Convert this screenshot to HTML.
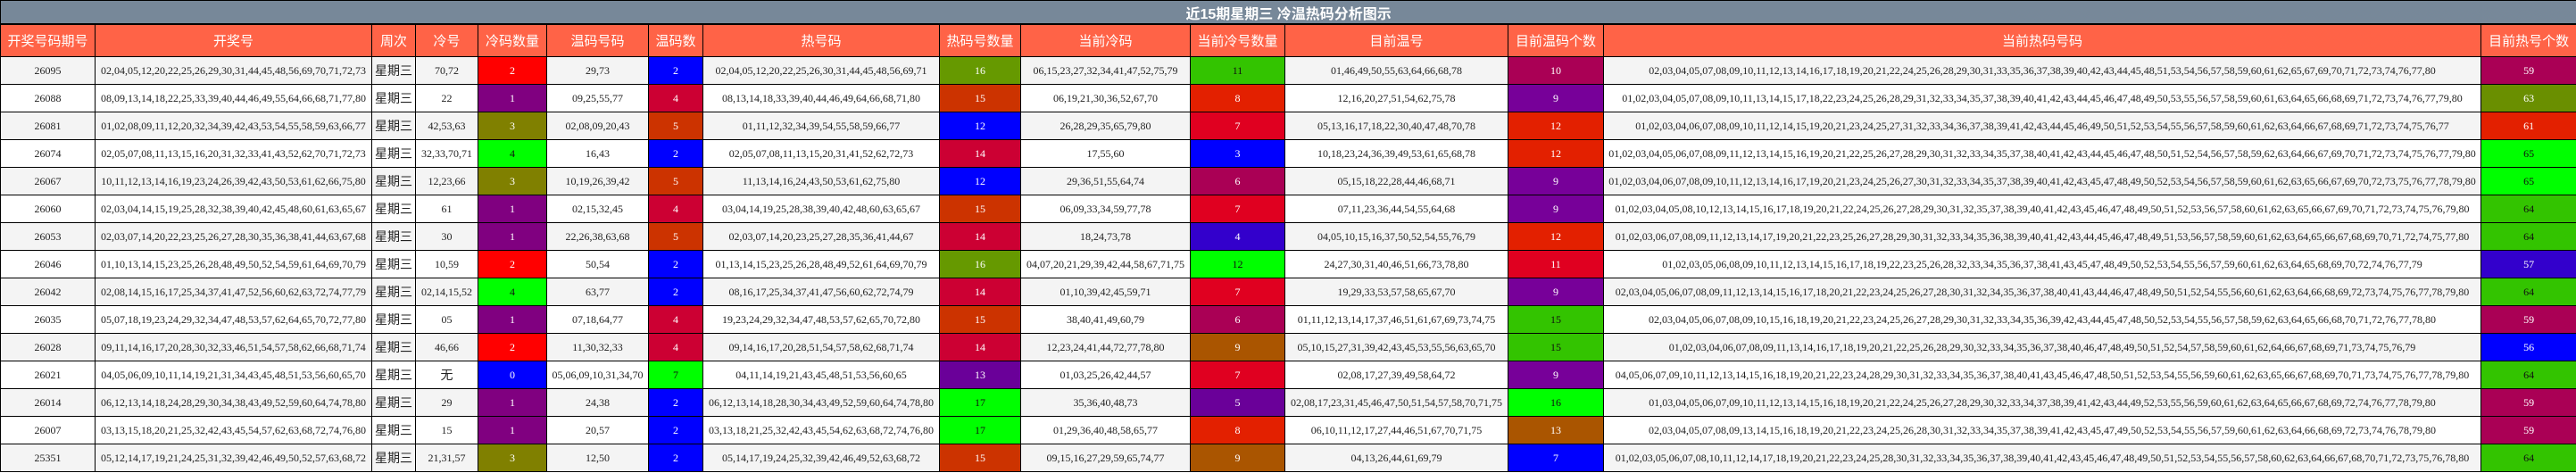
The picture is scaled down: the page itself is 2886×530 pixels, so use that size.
<!DOCTYPE html>
<html><head><meta charset="utf-8">
<style>
html,body{margin:0;padding:0;background:#fff;}
body{width:2886px;height:530px;overflow:hidden;}
table{border-collapse:collapse;table-layout:fixed;width:2886px;}
td,th{border:1px solid #000;padding:0;text-align:center;white-space:nowrap;overflow:hidden;}
.title td{height:25px;background:#778899;color:#fff;font:bold 16px "Liberation Sans","Noto Sans CJK SC",sans-serif;border-bottom:2px solid #000;}
.hd th{height:35px;background:#ff6347;color:#fff;font-weight:normal;font-size:15px;font-family:"Liberation Sans","Noto Sans CJK SC",sans-serif;}
tbody tr.r td{height:30px;font:12px "Liberation Serif","Noto Sans CJK SC",serif;color:#222;}
tbody tr.r:nth-child(odd) td{background:#f4f4f4;}
tbody tr.r:nth-child(even) td{background:#fff;}
tbody tr.r td.w{font-family:"Liberation Sans","Noto Sans CJK SC",sans-serif;font-size:14px;}
tbody tr.r td.c{color:#fff;}
tr.r td.red{background:#ff0000!important}
tr.r td.pur{background:#800080!important}
tr.r td.oli{background:#808000!important}
tr.r td.lim{background:#00ff00!important;color:#111!important}
tr.r td.blu{background:#0000ff!important}
tr.r td.org{background:#cc3300!important}
tr.r td.crm{background:#cc0033!important}
tr.r td.ogr{background:#669900!important}
tr.r td.grn{background:#33c400!important;color:#111!important}
tr.r td.ver{background:#e32000!important}
tr.r td.mar{background:#aa0055!important}
tr.r td.vio{background:#770099!important}
tr.r td.rd2{background:#e00020!important}
tr.r td.ind{background:#3300cc!important}
tr.r td.brn{background:#aa5500!important}
tr.r td.pu2{background:#6a0099!important}
tr.r td.olg{background:#6a8f00!important}
</style></head><body>
<table>
<colgroup>
<col style="width:106px"><col style="width:310px"><col style="width:49px"><col style="width:70px"><col style="width:77px"><col style="width:114px"><col style="width:61px"><col style="width:265px"><col style="width:91px"><col style="width:190px"><col style="width:106px"><col style="width:250px"><col style="width:107px"><col style="width:983px"><col style="width:107px">
</colgroup>
<tbody>
<tr class="title"><td colspan="15">近15期星期三 冷温热码分析图示</td></tr>
<tr class="hd"><th>开奖号码期号</th><th>开奖号</th><th>周次</th><th>冷号</th><th>冷码数量</th><th>温码号码</th><th>温码数</th><th>热号码</th><th>热码号数量</th><th>当前冷码</th><th>当前冷号数量</th><th>目前温号</th><th>目前温码个数</th><th>当前热码号码</th><th>目前热号个数</th></tr>

<tr class="r"><td>26095</td><td>02,04,05,12,20,22,25,26,29,30,31,44,45,48,56,69,70,71,72,73</td><td class="w">星期三</td><td>70,72</td><td class="c red">2</td><td>29,73</td><td class="c blu">2</td><td>02,04,05,12,20,22,25,26,30,31,44,45,48,56,69,71</td><td class="c ogr">16</td><td>06,15,23,27,32,34,41,47,52,75,79</td><td class="c grn">11</td><td>01,46,49,50,55,63,64,66,68,78</td><td class="c mar">10</td><td>02,03,04,05,07,08,09,10,11,12,13,14,16,17,18,19,20,21,22,24,25,26,28,29,30,31,33,35,36,37,38,39,40,42,43,44,45,48,51,53,54,56,57,58,59,60,61,62,65,67,69,70,71,72,73,74,76,77,80</td><td class="c mar">59</td></tr>

<tr class="r"><td>26088</td><td>08,09,13,14,18,22,25,33,39,40,44,46,49,55,64,66,68,71,77,80</td><td class="w">星期三</td><td>22</td><td class="c pur">1</td><td>09,25,55,77</td><td class="c crm">4</td><td>08,13,14,18,33,39,40,44,46,49,64,66,68,71,80</td><td class="c org">15</td><td>06,19,21,30,36,52,67,70</td><td class="c ver">8</td><td>12,16,20,27,51,54,62,75,78</td><td class="c vio">9</td><td>01,02,03,04,05,07,08,09,10,11,13,14,15,17,18,22,23,24,25,26,28,29,31,32,33,34,35,37,38,39,40,41,42,43,44,45,46,47,48,49,50,53,55,56,57,58,59,60,61,63,64,65,66,68,69,71,72,73,74,76,77,79,80</td><td class="c olg">63</td></tr>

<tr class="r"><td>26081</td><td>01,02,08,09,11,12,20,32,34,39,42,43,53,54,55,58,59,63,66,77</td><td class="w">星期三</td><td>42,53,63</td><td class="c oli">3</td><td>02,08,09,20,43</td><td class="c org">5</td><td>01,11,12,32,34,39,54,55,58,59,66,77</td><td class="c blu">12</td><td>26,28,29,35,65,79,80</td><td class="c rd2">7</td><td>05,13,16,17,18,22,30,40,47,48,70,78</td><td class="c ver">12</td><td>01,02,03,04,06,07,08,09,10,11,12,14,15,19,20,21,23,24,25,27,31,32,33,34,36,37,38,39,41,42,43,44,45,46,49,50,51,52,53,54,55,56,57,58,59,60,61,62,63,64,66,67,68,69,71,72,73,74,75,76,77</td><td class="c ver">61</td></tr>

<tr class="r"><td>26074</td><td>02,05,07,08,11,13,15,16,20,31,32,33,41,43,52,62,70,71,72,73</td><td class="w">星期三</td><td>32,33,70,71</td><td class="c lim">4</td><td>16,43</td><td class="c blu">2</td><td>02,05,07,08,11,13,15,20,31,41,52,62,72,73</td><td class="c crm">14</td><td>17,55,60</td><td class="c blu">3</td><td>10,18,23,24,36,39,49,53,61,65,68,78</td><td class="c ver">12</td><td>01,02,03,04,05,06,07,08,09,11,12,13,14,15,16,19,20,21,22,25,26,27,28,29,30,31,32,33,34,35,37,38,40,41,42,43,44,45,46,47,48,50,51,52,54,56,57,58,59,62,63,64,66,67,69,70,71,72,73,74,75,76,77,79,80</td><td class="c lim">65</td></tr>

<tr class="r"><td>26067</td><td>10,11,12,13,14,16,19,23,24,26,39,42,43,50,53,61,62,66,75,80</td><td class="w">星期三</td><td>12,23,66</td><td class="c oli">3</td><td>10,19,26,39,42</td><td class="c org">5</td><td>11,13,14,16,24,43,50,53,61,62,75,80</td><td class="c blu">12</td><td>29,36,51,55,64,74</td><td class="c mar">6</td><td>05,15,18,22,28,44,46,68,71</td><td class="c vio">9</td><td>01,02,03,04,06,07,08,09,10,11,12,13,14,16,17,19,20,21,23,24,25,26,27,30,31,32,33,34,35,37,38,39,40,41,42,43,45,47,48,49,50,52,53,54,56,57,58,59,60,61,62,63,65,66,67,69,70,72,73,75,76,77,78,79,80</td><td class="c lim">65</td></tr>

<tr class="r"><td>26060</td><td>02,03,04,14,15,19,25,28,32,38,39,40,42,45,48,60,61,63,65,67</td><td class="w">星期三</td><td>61</td><td class="c pur">1</td><td>02,15,32,45</td><td class="c crm">4</td><td>03,04,14,19,25,28,38,39,40,42,48,60,63,65,67</td><td class="c org">15</td><td>06,09,33,34,59,77,78</td><td class="c rd2">7</td><td>07,11,23,36,44,54,55,64,68</td><td class="c vio">9</td><td>01,02,03,04,05,08,10,12,13,14,15,16,17,18,19,20,21,22,24,25,26,27,28,29,30,31,32,35,37,38,39,40,41,42,43,45,46,47,48,49,50,51,52,53,56,57,58,60,61,62,63,65,66,67,69,70,71,72,73,74,75,76,79,80</td><td class="c grn">64</td></tr>

<tr class="r"><td>26053</td><td>02,03,07,14,20,22,23,25,26,27,28,30,35,36,38,41,44,63,67,68</td><td class="w">星期三</td><td>30</td><td class="c pur">1</td><td>22,26,38,63,68</td><td class="c org">5</td><td>02,03,07,14,20,23,25,27,28,35,36,41,44,67</td><td class="c crm">14</td><td>18,24,73,78</td><td class="c ind">4</td><td>04,05,10,15,16,37,50,52,54,55,76,79</td><td class="c ver">12</td><td>01,02,03,06,07,08,09,11,12,13,14,17,19,20,21,22,23,25,26,27,28,29,30,31,32,33,34,35,36,38,39,40,41,42,43,44,45,46,47,48,49,51,53,56,57,58,59,60,61,62,63,64,65,66,67,68,69,70,71,72,74,75,77,80</td><td class="c grn">64</td></tr>

<tr class="r"><td>26046</td><td>01,10,13,14,15,23,25,26,28,48,49,50,52,54,59,61,64,69,70,79</td><td class="w">星期三</td><td>10,59</td><td class="c red">2</td><td>50,54</td><td class="c blu">2</td><td>01,13,14,15,23,25,26,28,48,49,52,61,64,69,70,79</td><td class="c ogr">16</td><td>04,07,20,21,29,39,42,44,58,67,71,75</td><td class="c lim">12</td><td>24,27,30,31,40,46,51,66,73,78,80</td><td class="c rd2">11</td><td>01,02,03,05,06,08,09,10,11,12,13,14,15,16,17,18,19,22,23,25,26,28,32,33,34,35,36,37,38,41,43,45,47,48,49,50,52,53,54,55,56,57,59,60,61,62,63,64,65,68,69,70,72,74,76,77,79</td><td class="c ind">57</td></tr>

<tr class="r"><td>26042</td><td>02,08,14,15,16,17,25,34,37,41,47,52,56,60,62,63,72,74,77,79</td><td class="w">星期三</td><td>02,14,15,52</td><td class="c lim">4</td><td>63,77</td><td class="c blu">2</td><td>08,16,17,25,34,37,41,47,56,60,62,72,74,79</td><td class="c crm">14</td><td>01,10,39,42,45,59,71</td><td class="c rd2">7</td><td>19,29,33,53,57,58,65,67,70</td><td class="c vio">9</td><td>02,03,04,05,06,07,08,09,11,12,13,14,15,16,17,18,20,21,22,23,24,25,26,27,28,30,31,32,34,35,36,37,38,40,41,43,44,46,47,48,49,50,51,52,54,55,56,60,61,62,63,64,66,68,69,72,73,74,75,76,77,78,79,80</td><td class="c grn">64</td></tr>

<tr class="r"><td>26035</td><td>05,07,18,19,23,24,29,32,34,47,48,53,57,62,64,65,70,72,77,80</td><td class="w">星期三</td><td>05</td><td class="c pur">1</td><td>07,18,64,77</td><td class="c crm">4</td><td>19,23,24,29,32,34,47,48,53,57,62,65,70,72,80</td><td class="c org">15</td><td>38,40,41,49,60,79</td><td class="c mar">6</td><td>01,11,12,13,14,17,37,46,51,61,67,69,73,74,75</td><td class="c grn">15</td><td>02,03,04,05,06,07,08,09,10,15,16,18,19,20,21,22,23,24,25,26,27,28,29,30,31,32,33,34,35,36,39,42,43,44,45,47,48,50,52,53,54,55,56,57,58,59,62,63,64,65,66,68,70,71,72,76,77,78,80</td><td class="c mar">59</td></tr>

<tr class="r"><td>26028</td><td>09,11,14,16,17,20,28,30,32,33,46,51,54,57,58,62,66,68,71,74</td><td class="w">星期三</td><td>46,66</td><td class="c red">2</td><td>11,30,32,33</td><td class="c crm">4</td><td>09,14,16,17,20,28,51,54,57,58,62,68,71,74</td><td class="c crm">14</td><td>12,23,24,41,44,72,77,78,80</td><td class="c brn">9</td><td>05,10,15,27,31,39,42,43,45,53,55,56,63,65,70</td><td class="c grn">15</td><td>01,02,03,04,06,07,08,09,11,13,14,16,17,18,19,20,21,22,25,26,28,29,30,32,33,34,35,36,37,38,40,46,47,48,49,50,51,52,54,57,58,59,60,61,62,64,66,67,68,69,71,73,74,75,76,79</td><td class="c blu">56</td></tr>

<tr class="r"><td>26021</td><td>04,05,06,09,10,11,14,19,21,31,34,43,45,48,51,53,56,60,65,70</td><td class="w">星期三</td><td class="w">无</td><td class="c blu">0</td><td>05,06,09,10,31,34,70</td><td class="c lim">7</td><td>04,11,14,19,21,43,45,48,51,53,56,60,65</td><td class="c pu2">13</td><td>01,03,25,26,42,44,57</td><td class="c rd2">7</td><td>02,08,17,27,39,49,58,64,72</td><td class="c vio">9</td><td>04,05,06,07,09,10,11,12,13,14,15,16,18,19,20,21,22,23,24,28,29,30,31,32,33,34,35,36,37,38,40,41,43,45,46,47,48,50,51,52,53,54,55,56,59,60,61,62,63,65,66,67,68,69,70,71,73,74,75,76,77,78,79,80</td><td class="c grn">64</td></tr>

<tr class="r"><td>26014</td><td>06,12,13,14,18,24,28,29,30,34,38,43,49,52,59,60,64,74,78,80</td><td class="w">星期三</td><td>29</td><td class="c pur">1</td><td>24,38</td><td class="c blu">2</td><td>06,12,13,14,18,28,30,34,43,49,52,59,60,64,74,78,80</td><td class="c lim">17</td><td>35,36,40,48,73</td><td class="c pu2">5</td><td>02,08,17,23,31,45,46,47,50,51,54,57,58,70,71,75</td><td class="c lim">16</td><td>01,03,04,05,06,07,09,10,11,12,13,14,15,16,18,19,20,21,22,24,25,26,27,28,29,30,32,33,34,37,38,39,41,42,43,44,49,52,53,55,56,59,60,61,62,63,64,65,66,67,68,69,72,74,76,77,78,79,80</td><td class="c mar">59</td></tr>

<tr class="r"><td>26007</td><td>03,13,15,18,20,21,25,32,42,43,45,54,57,62,63,68,72,74,76,80</td><td class="w">星期三</td><td>15</td><td class="c pur">1</td><td>20,57</td><td class="c blu">2</td><td>03,13,18,21,25,32,42,43,45,54,62,63,68,72,74,76,80</td><td class="c lim">17</td><td>01,29,36,40,48,58,65,77</td><td class="c ver">8</td><td>06,10,11,12,17,27,44,46,51,67,70,71,75</td><td class="c brn">13</td><td>02,03,04,05,07,08,09,13,14,15,16,18,19,20,21,22,23,24,25,26,28,30,31,32,33,34,35,37,38,39,41,42,43,45,47,49,50,52,53,54,55,56,57,59,60,61,62,63,64,66,68,69,72,73,74,76,78,79,80</td><td class="c mar">59</td></tr>

<tr class="r"><td>25351</td><td>05,12,14,17,19,21,24,25,31,32,39,42,46,49,50,52,57,63,68,72</td><td class="w">星期三</td><td>21,31,57</td><td class="c oli">3</td><td>12,50</td><td class="c blu">2</td><td>05,14,17,19,24,25,32,39,42,46,49,52,63,68,72</td><td class="c org">15</td><td>09,15,16,27,29,59,65,74,77</td><td class="c brn">9</td><td>04,13,26,44,61,69,79</td><td class="c blu">7</td><td>01,02,03,05,06,07,08,10,11,12,14,17,18,19,20,21,22,23,24,25,28,30,31,32,33,34,35,36,37,38,39,40,41,42,43,45,46,47,48,49,50,51,52,53,54,55,56,57,58,60,62,63,64,66,67,68,70,71,72,73,75,76,78,80</td><td class="c grn">64</td></tr>
</tbody>
</table>
</body></html>
